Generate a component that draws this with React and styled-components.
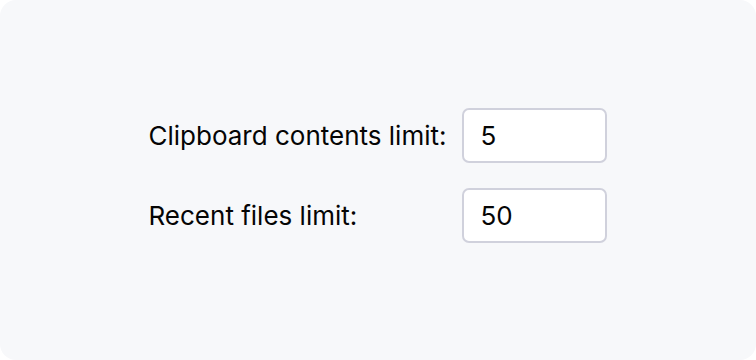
import styled, { createGlobalStyle } from "styled-components";

const GlobalStyle = createGlobalStyle`
  html, body {
    margin: 0;
    padding: 0;
    background: #ffffff;
  }
  body {
    font-family: Inter, "Noto Sans", sans-serif;
  }
`;

const Card = styled.div`
  width: 756px;
  height: 360px;
  box-sizing: border-box;
  background: #f7f8fa;
  border-radius: 16px;
  display: flex;
  align-items: center;
  justify-content: center;
  padding-bottom: 9px;
`;

const Form = styled.div`
  display: grid;
  grid-template-columns: auto 145px;
  column-gap: 16px;
  row-gap: 25px;
  align-items: center;
`;

const Label = styled.label`
  font-size: 26px;
  color: #050505;
  white-space: nowrap;
`;

const NumberInput = styled.input`
  box-sizing: border-box;
  width: 145px;
  height: 55px;
  padding: 0 16px;
  border: 2px solid #d0d1dc;
  border-radius: 7px;
  background: #ffffff;
  font-family: Inter, "Noto Sans", sans-serif;
  font-size: 26px;
  color: #050505;
  outline: none;
`;

const fields = [
  { id: "clipboard", label: "Clipboard contents limit:", value: "5" },
  { id: "recent", label: "Recent files limit:", value: "50" },
];

export default function App() {
  return (
    <>
      <GlobalStyle />
      <Card>
        <Form>
          {fields.map((f) => (
            <>
              <Label key={f.id + "-l"} htmlFor={f.id}>
                {f.label}
              </Label>
              <NumberInput key={f.id} id={f.id} defaultValue={f.value} />
            </>
          ))}
        </Form>
      </Card>
    </>
  );
}
